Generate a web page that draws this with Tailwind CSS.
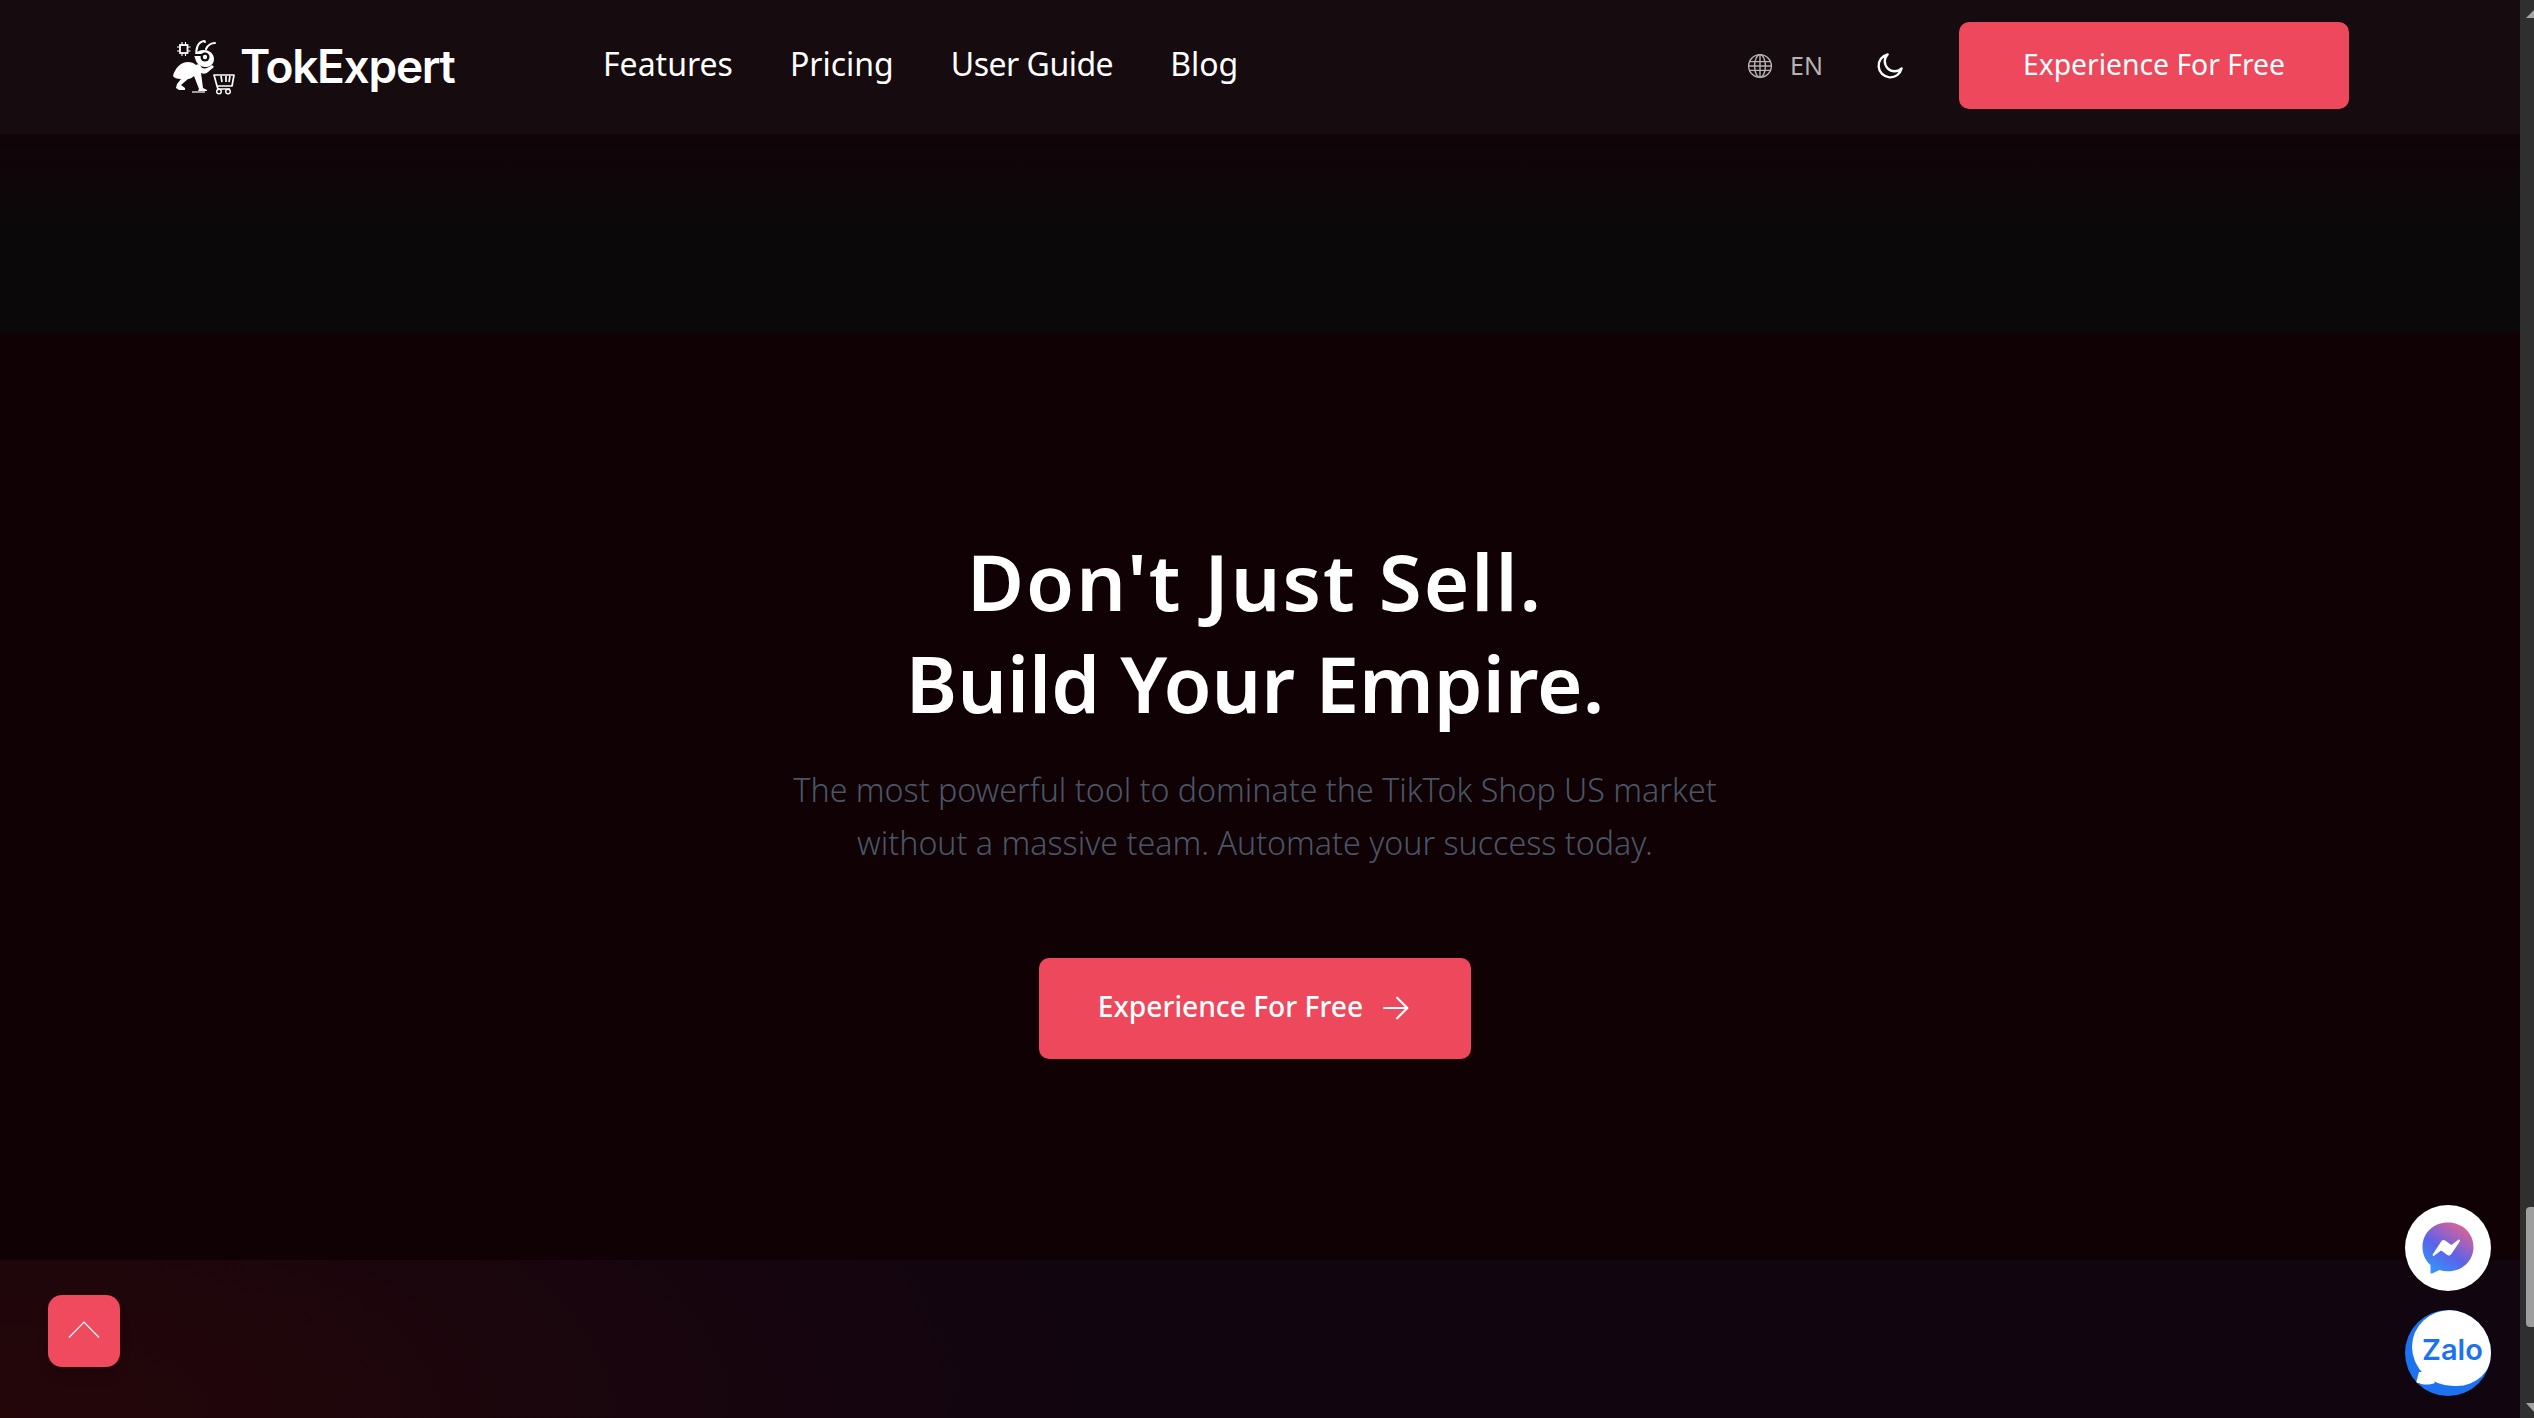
<!DOCTYPE html>
<html lang="en">
    <head>
        <meta charset="UTF-8" />
        <meta name="viewport" content="width=device-width, initial-scale=1.0" />
        <title>TokExpert</title>
        <script src="https://cdn.jsdelivr.net/npm/@tailwindcss/browser@4"></script>
    </head>
    <body class="h-[1418px] overflow-hidden bg-[#100105] font-['Noto_Sans',sans-serif]">
        <div class="flex h-[1418px]">
            <div class="relative flex-1 flex flex-col min-w-0">
                <!-- Header -->
                <header class="h-[134px] shrink-0 bg-[#160b0e] flex items-center pb-[3px] pl-[173px] pr-[171px] text-white">
                    <a class="flex items-center w-[430px] shrink-0">
                        <svg class="w-[62px] h-[58px]" viewBox="0 0 62 58" fill="none">
                            <!-- chip -->
                            <rect x="7" y="8" width="7.500" height="8" stroke="#fff" stroke-width="1.800" />
                            <path d="M4 10h3M4 14h3M14.500 10h3M14.500 14h3M9 5v3M12.500 5v3M9 16v3M12.500 16v3" stroke="#fff" stroke-width="1.100" />
                            <!-- antennae -->
                            <path d="M24 19c-2-7 1-14 7-15 1 0 1 1 1 1M33 12c2-4 5-6 9-6" stroke="#fff" stroke-width="2" stroke-linecap="round" />
                            <!-- head -->
                            <path d="M21 18c4-6 15-7 19 0 3 6-1 12-7 12-4 0-8-2-10-6z" fill="#fff" />
                            <path d="M20 17h11v2H20z" fill="#160b0e" />
                            <circle cx="32" cy="20" r="4.500" fill="#160b0e" />
                            <circle cx="32" cy="20" r="2.200" fill="#fff" />
                            <!-- abdomen, thorax and legs -->
                            <path d="M0 39c2-8 8-14 15-14 3 0 6 1 8 3 1-1 3-1 4 0l2 3c3 1 5 0 7-1l3-2 2 2-6 5c-2 2-5 2-7 1l2 15 4 2v1h-9l1-2-5-13c-2 2-4 3-6 3l-7 6 4 3v2H6l-3-2 1-4 4-5c-4 0-7-1-8-3z" fill="#fff" />
                            <path d="M19 55h13" stroke="#fff" stroke-width="1.200" />
                            <!-- cart -->
                            <path d="M41 38h20l-2 11H44zM44 49l1 3h12M48 39l1 6M53 39v6M57 39l-1 6" stroke="#fff" stroke-width="1.700" stroke-linejoin="round" />
                            <circle cx="46" cy="54.500" r="2.300" stroke="#fff" stroke-width="1.400" />
                            <circle cx="55" cy="54.500" r="2.300" stroke="#fff" stroke-width="1.400" />
                        </svg>
                        <span class="ml-[5px] text-[46px] leading-none font-semibold font-['Inter',sans-serif] tracking-[-1.300px]">TokExpert</span>
                    </a>
                    <nav class="flex items-center gap-[57px] text-[32px] leading-none pb-[3px]">
                        <a>Features</a>
                        <a>Pricing</a>
                        <a class="tracking-[-0.500px]">User Guide</a>
                        <a>Blog</a>
                    </nav>
                    <div class="ml-auto flex items-center">
                        <div class="flex items-center gap-[17px] text-[#b5b3b4] text-[25px]">
                            <svg class="w-[26px] h-[26px]" viewBox="0 0 24 24" fill="none" stroke="currentColor" stroke-width="1.300">
                                <circle cx="12" cy="12" r="10.500" />
                                <ellipse cx="12" cy="12" rx="5" ry="10.500" />
                                <path d="M12 1.500v21M2 8h20M2 16h20M1.500 12h21" />
                            </svg>
                            <span>EN</span>
                        </div>
                        <svg class="ml-[53px] w-[28px] h-[28px]" viewBox="0 0 24 24" fill="none" stroke="#fff" stroke-width="2" stroke-linecap="round" stroke-linejoin="round">
                            <path d="M10 2a10 10 0 1 0 12 12 8 8 0 0 1-12-12z" />
                        </svg>
                        <a class="ml-[55px] w-[390px] h-[87px] pb-[3px] rounded-[10px] bg-[#ed485b] flex items-center justify-center text-[28.300px]">Experience For Free</a>
                    </div>
                </header>
                <!-- Dark band under the header -->
                <div class="h-[199px] shrink-0 bg-linear-to-b from-[#110408] to-[#0b080a] to-[45%]"></div>
                <!-- Hero -->
                <main class="h-[927px] shrink-0 bg-[#100105] flex flex-col items-center pt-[197px] pr-[10px]">
                    <h1 class="text-[78px] leading-[102px] font-semibold text-white text-center"><span class="tracking-[2px]">Don't Just Sell.</span><br />Build Your Empire.</h1>
                    <p class="mt-[29px] text-[32.200px] leading-[53px] font-light text-gray-600 text-center">The most powerful tool to dominate the TikTok Shop US market<br />without a massive team. Automate your success today.</p>
                    <a class="mt-[89px] w-[432px] h-[101px] pb-[4px] pr-[3px] rounded-[10px] bg-[#ed485b] flex items-center justify-center gap-[20px] text-white text-[28.200px] font-medium">
                        <span>Experience For Free</span>
                        <svg class="w-[26px] h-[26px] mt-[3px]" viewBox="0 0 24 24" fill="none" stroke="currentColor" stroke-width="2" stroke-linecap="round" stroke-linejoin="round">
                            <path d="M1 12h21M13 2.500 22.500 12 13 21.500" />
                        </svg>
                    </a>
                </main>
                <!-- Footer start -->
                <div class="flex-1 bg-[radial-gradient(ellipse_1100px_500px_at_0%_100%,#240609,#110510_100%)]"></div>

                <!-- Floating buttons -->
                <a class="absolute left-[48px] top-[1295px] w-[72px] h-[72px] rounded-[14px] bg-[#ef4a5e] shadow-lg flex items-center justify-center">
                    <svg class="w-[32px] h-[17px] mb-[3px]" viewBox="0 0 32 17" fill="none" stroke="#fff" stroke-width="1.200">
                        <path d="M1 16.500 16 1 31 16.500" />
                    </svg>
                </a>
                <a class="absolute left-[2405px] top-[1205px] w-[86px] h-[86px] rounded-full bg-white flex items-center justify-center">
                    <svg class="w-[52px] h-[52px]" viewBox="0 0 52 52">
                        <defs>
                            <linearGradient id="msgr" x1="0.150" y1="1" x2="0.800" y2="0">
                                <stop offset="0" stop-color="#2f9bfb" />
                                <stop offset="0.450" stop-color="#5c62ea" />
                                <stop offset="1" stop-color="#e8638e" />
                            </linearGradient>
                        </defs>
                        <path d="M26 0.500C11.500 0.500 0.500 11 0.500 25c0 7.400 3 13.700 8 18v7.500c0 .8.8 1.300 1.500 1l7.600-3.400c2.600.8 5.400 1.200 8.400 1.200 14.500 0 25.500-10.500 25.500-24.300S40.500 0.500 26 0.500z" fill="url(#msgr)" />
                        <path d="M11 32l8.500-13c.8-1.200 2.400-1.500 3.600-.6l6.300 4.700 7-5.300c.9-.7 2.200.4 1.500 1.400L29 32.500c-.8 1.200-2.400 1.500-3.600.6l-6.300-4.700-7 5.300c-.9.7-2.100-.4-1.100-1.700z" fill="#fff" />
                    </svg>
                </a>
                <a class="absolute left-[2405px] top-[1310px] w-[86px] h-[86px] rounded-full bg-[#1d72f0] overflow-hidden">
                    <div class="absolute left-[7px] top-0 w-[80px] h-[76px] rounded-[50%_50%_46%_54%] bg-white"></div>
                    <svg class="absolute left-[10px] top-[62px] w-[20px] h-[16px]" viewBox="0 0 20 16"><path d="M4 0h12l4 11c-6 2-12 2-16 0l-3 0z" fill="#fff" /></svg>
                    <span class="absolute left-[17px] top-[20px] text-[29px] leading-[40px] font-semibold text-[#1d72f0] font-['Inter',sans-serif]">Zalo</span>
                </a>
            </div>
            <!-- Scrollbar -->
            <div class="w-[14px] shrink-0 bg-[#2f2f2f] relative">
                <svg class="absolute left-0 top-0 w-[14px] h-[1418px]" viewBox="0 0 14 1418">
                    <path d="M6 18h8v-8zM6 1403h8v9z" fill="#a3a3a3" />
                </svg>
                <div class="absolute left-[6px] top-[1207px] w-[8px] h-[120px] rounded-l-[4px] bg-[#9e9e9e]"></div>
            </div>
        </div>
    </body>
</html>
